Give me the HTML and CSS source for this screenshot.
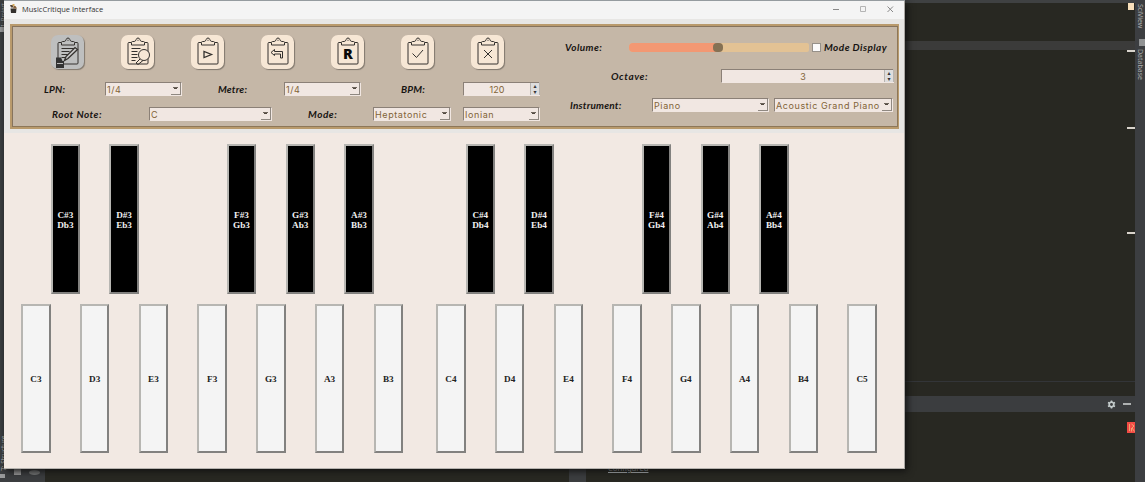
FILE: index.html
```
<!DOCTYPE html>
<html>
<head>
  <meta charset="utf-8">
  <title>MusicCritique Interface</title>
  <link rel="stylesheet" href="styles.css">
</head>
<body>
  <svg width="0" height="0" style="display: none">
    <symbol id="clipboard" viewBox="0 0 33 34">
      <path d="M10 7.500H8a1 1 0 0 0-1 1V28a1 1 0 0 0 1 1h18a1 1 0 0 0 1-1V8.500a1 1 0 0 0-1-1h-2"/>
      <path d="M10.500 10V7.500q0-1 1-1h1.700q1.500-.2 2-2 .4-1.500 1.800-1.500t1.800 1.500q.5 1.800 2 2h1.700q1 0 1 1V10z"/>
      <path d="M16.500 5.300h1"/>
    </symbol>
  </svg>

  <div class="ide">
    <div class="ide-left">
      <div class="vtext">1: Project</div>
      <div class="mark"></div>
      <div class="vtext structure">7: Structure</div>
      <div class="mark small"></div>
    </div>
    <div class="ide-main">
      <div class="tabs"></div>
      <div class="code top"></div>
      <div class="line"></div>
      <div class="code"></div>
      <div class="split"></div>
      <div class="bar">
        <svg width="9" height="9" viewBox="0 0 9 9">
          <circle cx="4.500" cy="4.500" r="2.300" fill="none" stroke="#c4cccc" stroke-width="1.700"/>
          <path d="M4.500 .5v1.500M4.500 7v1.500M1 2.500l1.300.7M6.700 5.800l1.300.7M1 6.500l1.300-.7M6.700 3.200L8 2.500" stroke="#c4cccc" stroke-width="1.500"/>
        </svg>
        <span class="hide"></span>
      </div>
      <div class="console">
        <div class="tools">
          <i></i><i class="eye"></i>
        </div>
        <div class="out"></div>
        <div class="divider"></div>
        <div class="out"><span class="link">Configured</span></div>
      </div>
    </div>
    <div class="ide-right">
      <div class="vtext">SciView</div>
      <div class="db"></div>
      <div class="vtext">Database</div>
    </div>
    <div class="warn"></div>
    <div class="tick" style="top: 50px"></div>
    <div class="tick" style="top: 127px"></div>
    <div class="tick" style="top: 232px"></div>
    <div class="error"><svg width="9" height="11" viewBox="0 0 9 11"><path d="M2.500 2v7M4.500 2L7 4 5 6l2.500 3.500M4.500 6v3.500" fill="none" stroke="#f2ae76" stroke-width=".9"/></svg></div>
  </div>

  <div class="window">
    <div class="titlebar">
      <svg class="logo" width="9" height="10" viewBox="0 0 9 10">
        <path d="M1.500 4.500h6L7 9H2z" fill="#33302d"/>
        <path d="M1 1h3v2.500H2z" fill="#554638"/>
        <path d="M4.500 2h2l1.500 2.500H4z" fill="#89633d"/>
        <path d="M3.500 0h2v2h-2z" fill="#d5aa5c"/>
      </svg>
      <span class="title">MusicCritique Interface</span>
      <svg class="controls" width="64" height="10" viewBox="0 0 64 10" fill="none" stroke="#888">
        <path d="M1 5.500h6"/>
        <path d="M28.500 2.500h5v5h-5z" stroke="#b4b4b4"/>
        <path d="M55.500 2.500l5.500 5.500M61 2.500L55.500 8"/>
      </svg>
    </div>

    <div class="panel-wrap">
      <div class="panel">
        <div class="left">
          <div class="buttons">
            <button class="btn active"><svg viewBox="0 0 33 34"><use href="#clipboard"/>
              <path d="M10.500 13.500h13M10.500 16.500h8M10.500 19.500h7M10.500 22.500h4"/>
              <path d="M13.500 25.500l1.500-4L24 12.500l2.500 2-9.500 9z" fill="#c9c9c9" stroke-width="1.300"/>
              <path d="M5 22.500h5l1.500 3.500h1.500V33H5z" fill="#333" stroke="none"/><path d="M6 28.500h6" stroke="#bbb"/></svg></button>
            <button class="btn"><svg viewBox="0 0 33 34"><use href="#clipboard"/>
              <path d="M10.500 13.500h9M10.500 16.500h6M10.500 19.500h6M10.500 22.500h6M10.500 25.500h4"/>
              <circle cx="23" cy="20" r="5.500" fill="#f7e7d5"/><path d="M19 24l-4 4 2 1.500 5-4"/></svg></button>
            <button class="btn"><svg viewBox="0 0 33 34"><use href="#clipboard"/>
              <path d="M13 16.500v6l7.500-3z" stroke-width="1.300"/></svg></button>
            <button class="btn"><svg viewBox="0 0 33 34"><use href="#clipboard"/>
              <path d="M10 17.500l3.500-3v2h8V23h-2v-4h-6v1.500z"/></svg></button>
            <button class="btn"><svg viewBox="0 0 33 34"><use href="#clipboard"/>
              <text x="17" y="24" text-anchor="middle">R</text></svg></button>
            <button class="btn"><svg viewBox="0 0 33 34"><use href="#clipboard"/>
              <path d="M11.500 18.500l4 4 6.500-7.500"/></svg></button>
            <button class="btn"><svg viewBox="0 0 33 34"><use href="#clipboard"/>
              <path d="M13 15l8 8M21 15l-8 8"/></svg></button>
          </div>
          <div class="row lpn">
            <label>LPN:</label><div class="select">1/4</div>
            <label>Metre:</label><div class="select">1/4</div>
            <label>BPM:</label><div class="spin">120</div>
          </div>
          <div class="row root">
            <label>Root Note:</label><div class="select">C</div>
            <label>Mode:</label><div class="select">Heptatonic</div><div class="select">Ionian</div>
          </div>
        </div>
        <div class="right">
          <div class="row volume">
            <label>Volume:</label>
            <div class="slider"><div class="fill" style="width: 89px"></div><div class="knob"></div></div>
            <div class="check"></div>
            <label>Mode Display</label>
          </div>
          <div class="row octave">
            <label>Octave:</label><div class="spin">3</div>
          </div>
          <div class="row instrument">
            <label>Instrument:</label><div class="select">Piano</div><div class="select wide">Acoustic Grand Piano</div>
          </div>
        </div>
      </div>
    </div>

    <div class="keyboard">
      <div class="oct">
        <div class="key black c">C#3<br>Db3</div>
        <div class="key black d">D#3<br>Eb3</div>
        <div class="key black f">F#3<br>Gb3</div>
        <div class="key black g">G#3<br>Ab3</div>
        <div class="key black a">A#3<br>Bb3</div>
        <div class="key white">C3</div>
        <div class="key white">D3</div>
        <div class="key white">E3</div>
        <div class="key white">F3</div>
        <div class="key white">G3</div>
        <div class="key white">A3</div>
        <div class="key white">B3</div>
      </div>
      <div class="oct">
        <div class="key black c">C#4<br>Db4</div>
        <div class="key black d">D#4<br>Eb4</div>
        <div class="key black f">F#4<br>Gb4</div>
        <div class="key black g">G#4<br>Ab4</div>
        <div class="key black a">A#4<br>Bb4</div>
        <div class="key white">C4</div>
        <div class="key white">D4</div>
        <div class="key white">E4</div>
        <div class="key white">F4</div>
        <div class="key white">G4</div>
        <div class="key white">A4</div>
        <div class="key white">B4</div>
        <div class="key white">C5</div>
      </div>
    </div>
  </div>
</body>
</html>
```

FILE: styles.css
```
* {
  box-sizing: border-box;
}

body {
  margin: 0;
  width: 1145px;
  height: 482px;
  overflow: hidden;
  background: #282822;
  position: relative;
}

/* editor behind the window */
.ide {
  display: flex;
  height: 482px;
  font-family: "Noto Sans", sans-serif;
  font-size: 8px;
  color: #aaa;
}

.ide-left {
  width: 10px;
  background: #3c3f41;
  display: flex;
  flex-direction: column;
}

.ide-left .vtext {
  transform: rotate(180deg);
  height: 27px;
  font-size: 5.500px;
  line-height: 7px;
  width: 7px;
}

.ide-left .mark {
  height: 5px;
  width: 5px;
  background: #9a9c9d;
}

.ide-left .structure {
  margin-top: 401px;
  height: 38px;
  font-size: 6.500px;
}

.ide-left .small {
  height: 4px;
  margin-top: 3px;
}

.vtext {
  writing-mode: vertical-rl;
  white-space: nowrap;
}

.ide-main {
  flex: 1;
  display: flex;
  flex-direction: column;
}

.tabs {
  height: 3px;
  background: #3f4142;
}

.code {
  height: 331px;
}

.code.top {
  height: 38px;
}

.line {
  height: 9px;
  background: #3b3b3a;
}

.split {
  height: 1px;
  background: #333538;
}

.bar {
  margin-top: 14px;
  height: 16px;
  background: #3b3d3f;
  display: flex;
  align-items: center;
  justify-content: flex-end;
  gap: 7px;
  padding-right: 4px;
}

.hide {
  width: 8px;
  height: 2px;
  background: #aeb1b1;
}

.console {
  flex: 1;
  display: flex;
  align-items: stretch;
}

.tools {
  width: 35px;
  background: #3b3d3f;
  display: flex;
  align-items: flex-end;
  padding: 0 5px 7px 4px;
  gap: 8px;
}

.tools i {
  width: 8px;
  height: 7px;
  background: #999;
}

.tools .eye {
  width: 12px;
  height: 5px;
  border-radius: 50%;
  background: #747676;
}

.out {
  width: 524px;
  display: flex;
  align-items: flex-end;
}

.divider {
  width: 17px;
  background: #3b3d3f;
}

.link {
  margin: 0 0 8px 22px;
  font-size: 7.700px;
  line-height: 12px;
  color: #b9bec1;
  text-decoration: underline;
}

.ide-right {
  width: 10px;
  background: #3c3e41;
  padding-top: 4px;
  font-size: 7px;
  line-height: 9px;
  display: flex;
  flex-direction: column;
}

.ide-right .vtext {
  width: 9px;
  margin-left: 1px;
}

.db {
  width: 6px;
  height: 7px;
  margin: 11px 0 3px 4px;
  background: #919394;
}

/* stripe marks over the editor edge */
.warn,
.tick,
.error {
  position: absolute;
  right: 10px;
}

.warn {
  top: 3px;
  right: 11px;
  width: 6px;
  height: 7px;
  background: #f8dfba;
}

.tick {
  width: 8px;
  height: 2px;
  background: #d8d3cb;
}

.error {
  top: 422px;
  width: 8px;
  height: 11px;
  background: #f34b45;
  overflow: hidden;
}

/* application window */
.window {
  position: absolute;
  left: 4px;
  top: 1px;
  width: 901px;
  height: 468px;
  background: #f2e9e3;
  border-right: 1px solid #aaa7a3;
  border-bottom: 1px solid #b6b3af;
  box-shadow: 0 -1px #959b9f, 2px 2px 7px #111;
}

.titlebar {
  height: 18px;
  background: #f4f4f4;
  display: flex;
  align-items: center;
  padding: 0 8px 2px 5px;
  font: 7.500px "Open Sans", sans-serif;
  color: #333;
}

.title {
  margin-left: 4px;
  width: 81px;
  white-space: nowrap;
}

.controls {
  margin-left: auto;
}

.panel-wrap {
  height: 114px;
  background: #e7e6e4;
  padding: 5px 5px 4px 6px;
}

.panel {
  height: 105px;
  background: #c5b7a7;
  border: 2px solid #b99a6c;
  border-right-width: 1px;
  box-shadow: inset 1px 1px #86735d, inset -1px -1px #8d7759;
  display: flex;
  color: #171412;
  font: italic bold 10px Lato, sans-serif;
  letter-spacing: .2px;
}

.left {
  width: 550px;
  padding-top: 9px;
}

.buttons {
  display: flex;
  gap: 37px;
  padding-left: 39px;
  height: 47px;
}

.btn {
  width: 33px;
  height: 34px;
  padding: 0;
  border: 0;
  border-radius: 7px;
  background: #f7e7d5;
  box-shadow: 1px 1px 1px #81786e;
}

.btn.active {
  background: #bebfbf;
}

.btn svg {
  display: block;
  width: 33px;
  height: 34px;
  overflow: visible;
  fill: none;
  stroke: #34312e;
  stroke-width: 1;
}

.btn text {
  font: 900 14.500px "Noto Sans", sans-serif;
  letter-spacing: 0;
  fill: #0a0a0a;
  stroke: none;
}

.row {
  display: grid;
  align-items: center;
  height: 14px;
  white-space: nowrap;
}

.lpn {
  grid-template-columns: 61px 77px 102px 77px 102px 77px;
  padding-left: 32px;
}

.lpn label:nth-of-type(2) {
  padding-left: 36px;
}

.lpn label:nth-of-type(3) {
  padding-left: 40px;
}

.root {
  grid-template-columns: 97px 123px 101px 78px 12px 77px;
  padding-left: 40px;
  margin-top: 11px;
}

.root label:nth-of-type(2) {
  padding-left: 36px;
}

.root .select:last-child {
  grid-column: 6;
}

.right {
  flex: 1;
  padding-top: 14px;
}

.volume {
  grid-template-columns: 64px 180px 3px 9px 3px auto;
  padding-left: 3px;
  letter-spacing: .45px;
}

.volume .check {
  grid-column: 4;
}

.volume label:last-child {
  grid-column: 6;
}

.octave {
  grid-template-columns: 110px 173px;
  padding-left: 49px;
  margin-top: 15px;
  letter-spacing: .6px;
}

.instrument {
  grid-template-columns: 82px 117px 124px;
  padding-left: 8px;
  margin-top: 15px;
}

.instrument .wide {
  margin-left: 5px;
}

.root label {
  letter-spacing: .5px;
}

.slider {
  height: 9px;
  border-radius: 4px 2px 2px 4px;
  background: #e3c294;
  display: flex;
  align-items: center;
}

.fill {
  height: 9px;
  border-radius: 4px 0 0 4px;
  background: #f39873;
}

.knob {
  width: 10px;
  height: 9px;
  margin-left: -5px;
  border-radius: 4px;
  background: #857154;
}

.check {
  height: 9px;
  background: #fbfafa;
  border: 1px solid #969089;
}

.select,
.spin {
  height: 14px;
  background: #f1e7e2;
  border: 1px solid #f1e7e2;
  border-top-color: #8b8077;
  border-left-color: #8b8077;
  color: #816337;
  font: 9px Inter, sans-serif;
}

.select {
  display: flex;
  align-items: center;
  justify-content: space-between;
  padding-left: 1px;
  letter-spacing: .6px;
}

.select::after {
  content: "";
  width: 9px;
  height: 11px;
  border-right: 1px solid #8f8881;
  border-bottom: 1px solid #8f8881;
  background: linear-gradient(#51483f, #51483f) 3px 5px / 3px 1px no-repeat,
    linear-gradient(#6d645b, #6d645b) 2px 4px / 5px 1px no-repeat;
}

.spin {
  display: grid;
  grid-template-columns: 0 1fr 9px;
  text-align: center;
  align-items: center;
  letter-spacing: 0;
}

.spin::before {
  content: "";
}

/* up and down arrows */
.spin::after {
  content: "▴\A▾";
  white-space: pre;
  width: 8px;
  height: 12px;
  font: 6px/6px "DejaVu Sans", sans-serif;
  text-align: center;
  color: #333;
  background: #dedddd;
  border: 1px solid #b8b4b0;
  border-width: 0 1px;
}

/* piano */
.keyboard {
  display: flex;
  gap: 3.800px;
  padding: 11px 0 0 17.300px;
}

.oct {
  display: grid;
  grid-auto-columns: 29.370px;
  grid-template-rows: 150px 149px;
  row-gap: 10px;
}

/* the last column of the lower octave has no key in it */
.oct:first-child {
  width: 411.200px;
}

.key {
  display: flex;
  align-items: center;
  justify-content: center;
  text-align: center;
  border: 2px solid;
  border-color: #b7b6b2 #82817f #82817f #b7b6b2;
  font: bold 9.200px/10px "Liberation Serif", serif;
}

.black {
  grid-row: 1;
  padding-top: 2px;
  background: #000;
  color: #f0f0f0;
}

.white {
  grid-row: 2;
  background: #f4f4f4;
  color: #222;
}

.c { grid-column: 2; }
.d { grid-column: 4; }
.f { grid-column: 8; }
.g { grid-column: 10; }
.a { grid-column: 12; }

.white:nth-child(6) { grid-column: 1; }
.white:nth-child(7) { grid-column: 3; }
.white:nth-child(8) { grid-column: 5; }
.white:nth-child(9) { grid-column: 7; }
.white:nth-child(10) { grid-column: 9; }
.white:nth-child(11) { grid-column: 11; }
.white:nth-child(12) { grid-column: 13; }
.white:nth-child(13) { grid-column: 15; }
```
